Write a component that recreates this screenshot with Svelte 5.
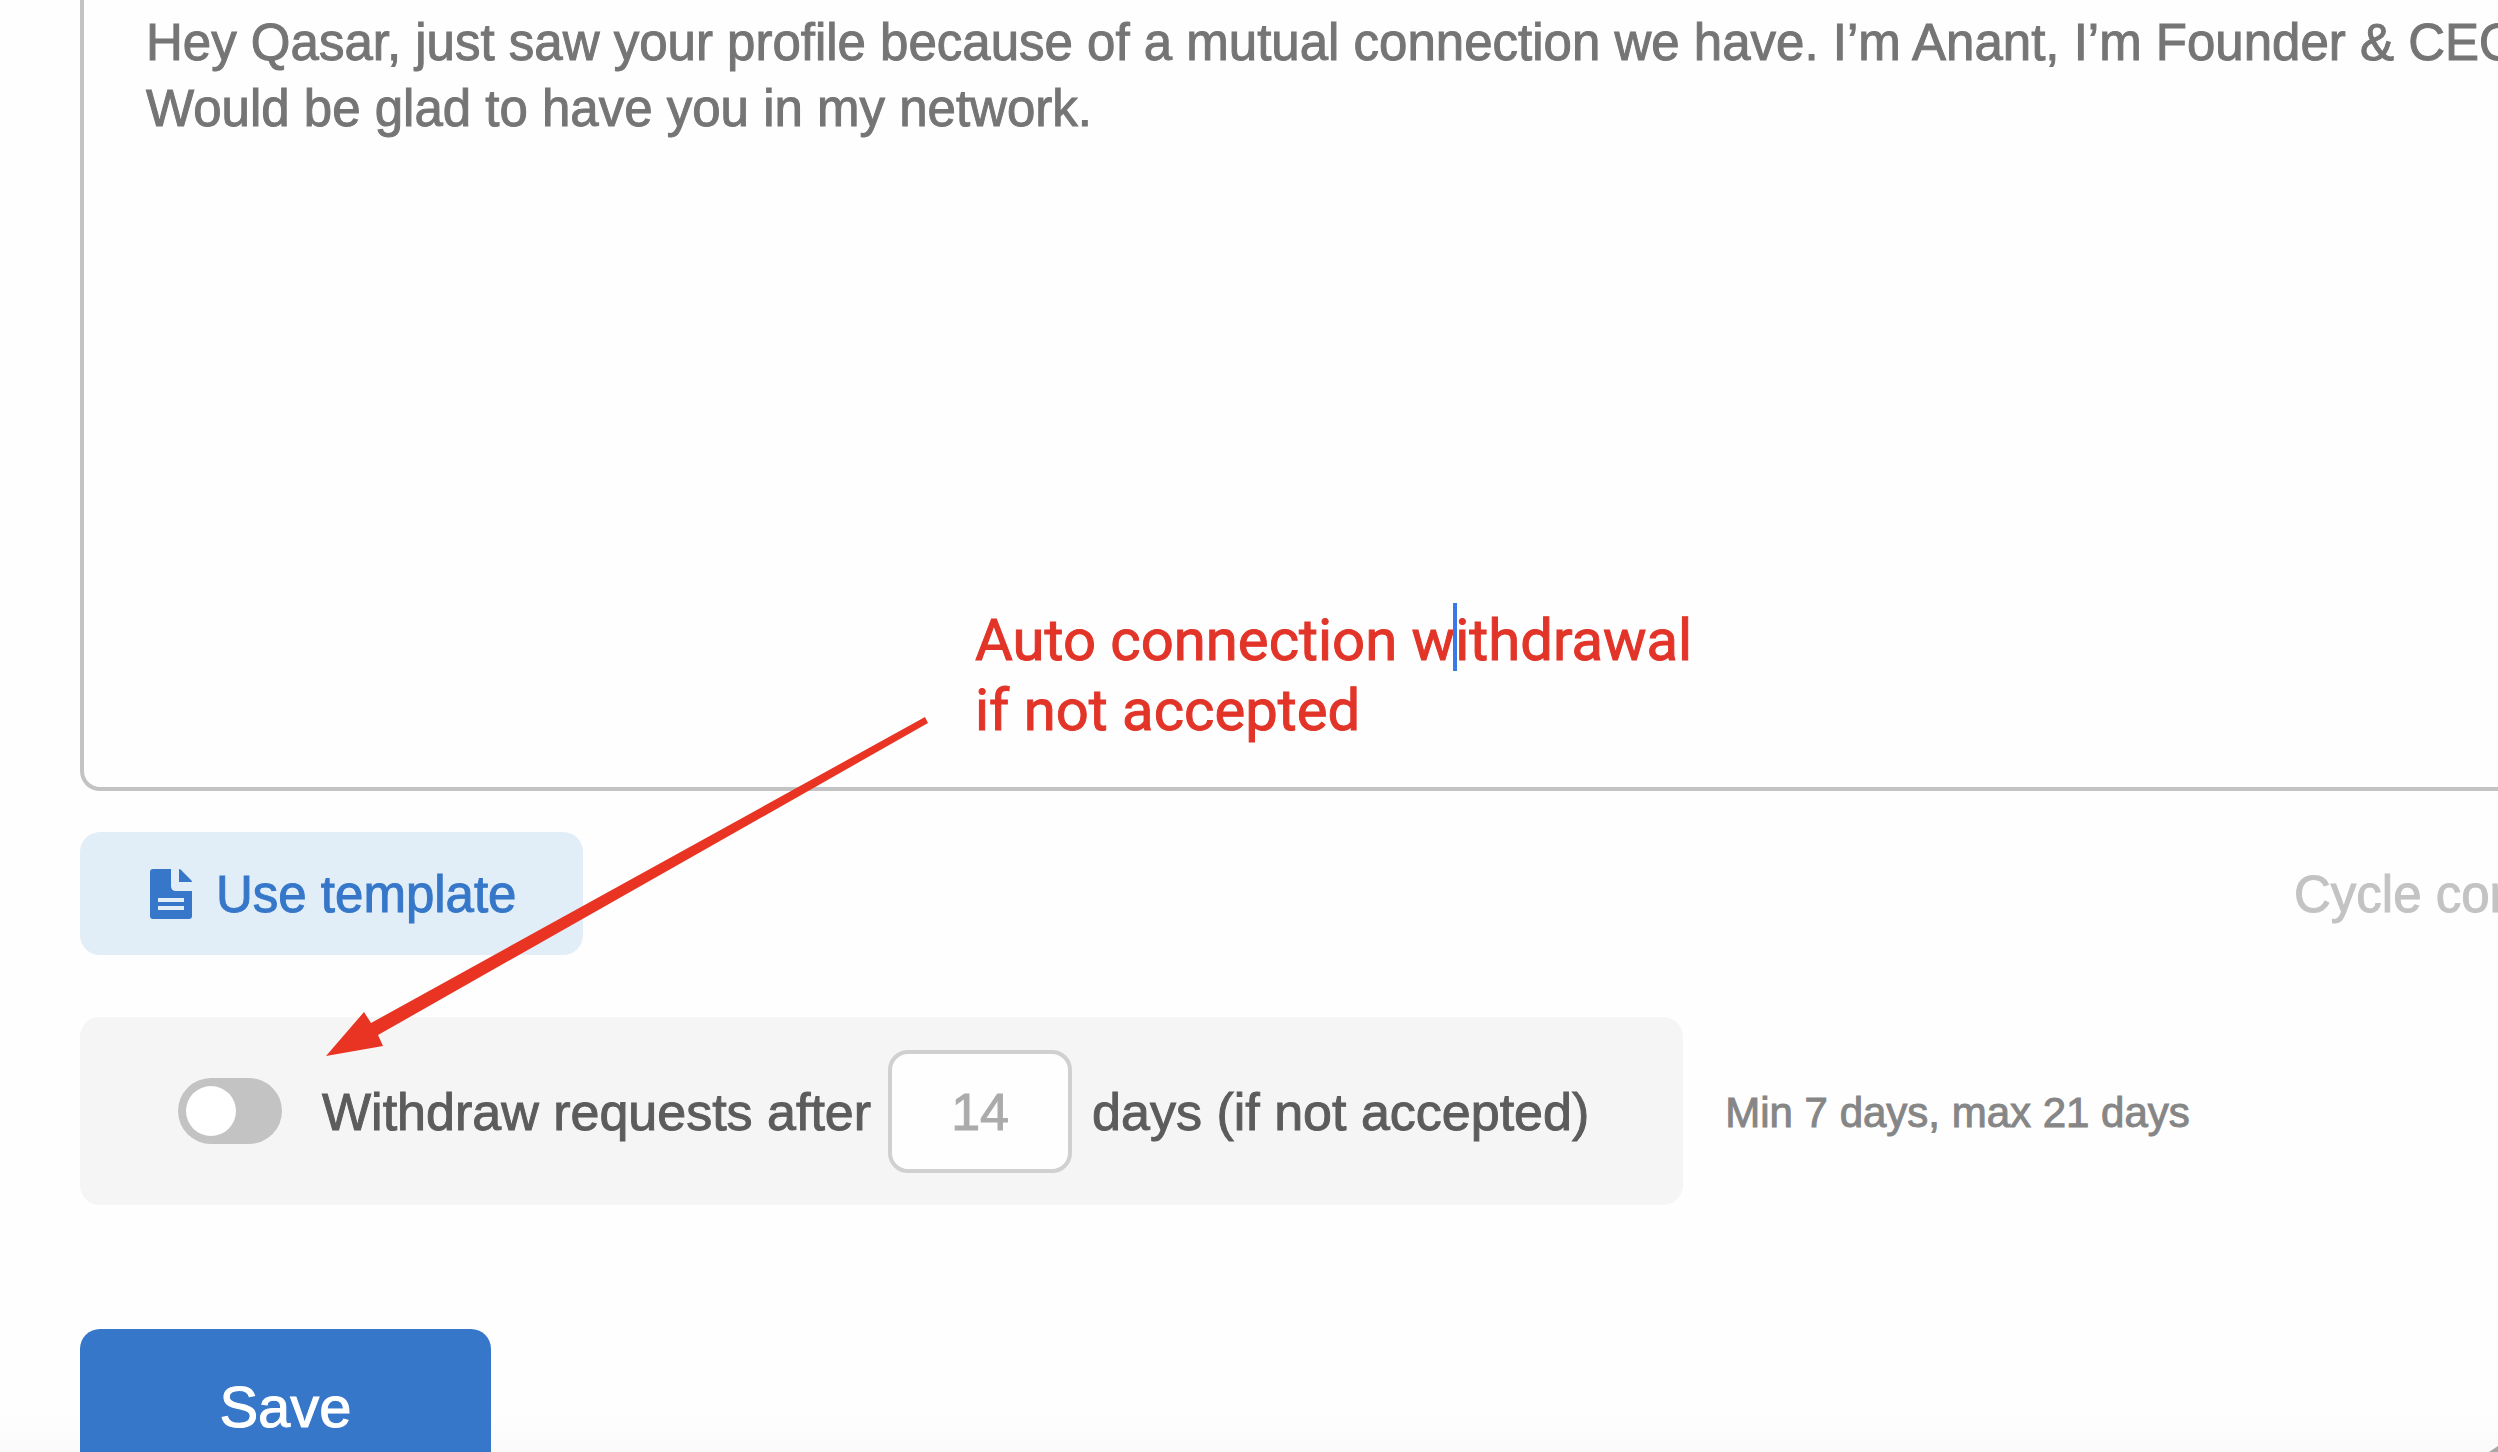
<script lang="ts">
  let message = $state(
    'Hey Qasar, just saw your profile because of a mutual connection we have. I’m Anant, I’m Founder & CEO\nWould be glad to have you in my network.'
  );
  let withdraw = $state(false);
  let days = $state('');
</script>

<main class="page">
  <textarea class="message" aria-label="Connection message" wrap="off" spellcheck="false" bind:value={message}></textarea>

  <div class="tools">
    <button class="template" type="button">
      <svg viewBox="0 0 42 50" aria-hidden="true">
        <path d="M3 0h18v17q0 5 5 5h16v25q0 3-3 3H3q-3 0-3-3V3q0-3 3-3Z" fill="currentColor" />
        <path d="M29 0q2 0 4 3l8 8q1 1 1 2H29Z" fill="currentColor" />
        <path d="M8 31h26M8 39h26" stroke="#e1edf7" stroke-width="4" />
      </svg>
      <span>Use template</span>
    </button>
    <span class="cycle">Cycle connection</span>
  </div>

  <div class="settings">
    <div class="panel">
      <input class="toggle" id="withdraw" type="checkbox" role="switch" bind:checked={withdraw} />
      <label for="withdraw">Withdraw requests after</label>
      <input class="days" id="days" type="text" inputmode="numeric" placeholder="14" bind:value={days} />
      <label for="days">days (if not accepted)</label>
    </div>
    <span class="hint">Min 7 days, max 21 days</span>
  </div>

  <button class="save" type="button">Save</button>

  <!-- annotation layer -->
  <p class="note">Auto connection w<span class="caret"></span>ithdrawal<br />if not accepted</p>
  <svg class="arrow" viewBox="0 0 602 340" aria-hidden="true">
    <path d="M0 340 38 296 45 307 599 1 602 7 52 319 57 330Z" fill="#ea3423" />
  </svg>
  <svg class="corner" viewBox="0 0 9 6" aria-hidden="true">
    <path d="M0 6 9 0V6Z" fill="#a8a8a8" />
  </svg>
</main>

<style>
  :global(body) {
    background: #fefefe;
  }

  .page {
    position: relative;
    box-sizing: border-box;
    height: 100vh;
    padding-left: 80px;
    overflow: hidden;
    display: flex;
    flex-direction: column;
    align-items: flex-start;
    color: #5c5c5c;
    background: linear-gradient(to top, #fafafa, #fefefe 40px);
    font: 51px/66px 'Liberation Sans', Arial, sans-serif;
    -webkit-text-stroke: 1px currentColor;
  }

  .page > * {
    flex-shrink: 0;
  }

  button,
  input,
  textarea {
    box-sizing: border-box;
    margin: 0;
    font: inherit;
    -webkit-text-stroke: inherit;
  }

  .message {
    align-self: stretch;
    height: 791px;
    padding: 10px 0 0 62px;
    border: solid #c3c3c3;
    border-width: 0 0 4px 4px;
    border-radius: 0 0 0 20px;
    outline: none;
    resize: none;
    overflow: hidden;
    color: #757575;
    background: #fefefe;
  }

  .tools {
    align-self: stretch;
    display: flex;
    align-items: center;
    justify-content: space-between;
    margin-top: 41px;
    overflow: hidden;
  }

  .tools span,
  .settings label {
    padding-top: 2px;
  }

  .template {
    display: flex;
    align-items: center;
    gap: 24px;
    height: 123px;
    padding: 0 67px 0 70px;
    border: 0;
    border-radius: 20px;
    color: #3677c9;
    background: #e1edf7;
  }

  .template svg {
    width: 42px;
    height: 50px;
  }

  .cycle {
    width: 204px;
    white-space: nowrap;
    color: #c3c3c3;
  }

  .settings {
    display: flex;
    align-items: center;
    gap: 42px;
    margin-top: 62px;
  }

  .panel {
    display: flex;
    align-items: center;
    height: 188px;
    padding: 0 94px 0 98px;
    border-radius: 20px;
    background: #f5f5f5;
    font-size: 52px;
    white-space: nowrap;
  }

  .toggle {
    appearance: none;
    display: flex;
    width: 104px;
    height: 66px;
    margin-right: 40px;
    padding: 8px;
    border-radius: 33px;
    background: #c3c3c3;
  }

  .toggle::before {
    content: '';
    width: 50px;
    height: 50px;
    border-radius: 50%;
    background: #fff;
  }

  .toggle:checked {
    justify-content: flex-end;
    background: #3677c9;
  }

  .days {
    width: 184px;
    height: 123px;
    margin: 0 20px 0 17px;
    padding: 2px 0 0;
    border: 4px solid #d0d0d0;
    border-radius: 20px;
    background: #fefefe;
    text-align: center;
  }

  .days::placeholder {
    color: #ababab;
  }

  .hint {
    padding-top: 4px;
    color: #868686;
    font-size: 42px;
  }

  .save {
    width: 411px;
    height: 156px;
    margin-top: 124px;
    border: 0;
    border-radius: 20px;
    color: #fff;
    background: #3677c9;
    font-size: 58px;
  }

  .note {
    position: absolute;
    top: 605px;
    left: 975px;
    margin: 0;
    color: #e23428;
    font: 58px/70px Roboto, sans-serif;
    -webkit-text-stroke: 1px currentColor;
    white-space: nowrap;
  }

  .caret {
    display: inline-block;
    width: 4px;
    height: 68px;
    margin: -4px -2px 0;
    background: #3b78e7;
    vertical-align: -11px;
  }

  .arrow {
    position: absolute;
    top: 716px;
    left: 326px;
    width: 602px;
    height: 340px;
  }

  .corner {
    position: absolute;
    right: 0;
    bottom: 0;
    width: 9px;
    height: 6px;
  }
</style>
